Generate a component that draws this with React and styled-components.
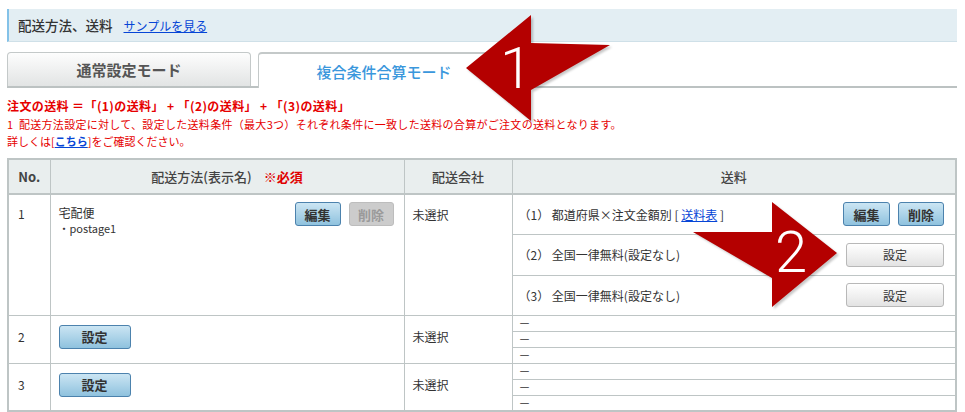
import React from 'react';
import styled, { createGlobalStyle } from 'styled-components';

const GlobalStyle = createGlobalStyle`
  body {
    margin: 0;
    background: #fff;
    font-family: "Noto Sans CJK JP", "Noto Sans", sans-serif;
    color: #333;
  }
`;

const Page = styled.div`
  position: relative;
  width: 950px;
  padding: 9px 8px 0 7px;
  overflow: hidden;
`;

const HeaderBar = styled.div`
  display: flex;
  align-items: center;
  gap: 11px;
  height: 33px;
  padding-left: 9px;
  background: #e3eef3;
  border-left: 2px solid #84c2e8;
  border-bottom: 1px solid #cfe0e8;
  box-sizing: border-box;
`;

const HeaderTitle = styled.span`
  font-size: 13.5px;
  font-weight: 500;
  color: #333;
`;

const TextLink = styled.a`
  color: #0645d6;
  text-decoration: underline;
  font-size: ${p => p.$size || 12}px;
  font-weight: ${p => (p.$bold ? 'bold' : 'normal')};
  cursor: pointer;
`;

const TabStrip = styled.div`
  display: flex;
  gap: 7px;
  margin-top: 10px;
  height: 34px;
  border-bottom: 2px solid #bcc2c2;
`;

const Tab = styled.div`
  width: ${p => (p.$active ? 252 : 244)}px;
  display: flex;
  align-items: center;
  justify-content: center;
  box-sizing: border-box;
  border: 1px solid #c4c9c9;
  border-bottom: none;
  border-radius: 4px 4px 0 0;
  font-size: 15px;
  font-weight: ${p => (p.$active ? 500 : 'bold')};
  color: ${p => (p.$active ? '#3a97dc' : '#555')};
  background: ${p => (p.$active ? '#fff' : 'linear-gradient(#fdfdfd, #e2e4e4)')};
  height: ${p => (p.$active ? 36 : 34)}px;
  margin-bottom: ${p => (p.$active ? -2 : 0)}px;
  border-top-width: ${p => (p.$active ? 2 : 1)}px;
`;

const Notes = styled.div`
  margin-top: 9px;
  color: #e60000;
`;

const NoteTitle = styled.div`
  font-size: 12px;
  font-weight: bold;
  line-height: 18px;
  letter-spacing: 0.4px;
  white-space: pre;
`;

const NoteLine = styled.div`
  font-size: 11px;
  line-height: 17px;
  letter-spacing: ${p => p.$spacing || 0}px;
  margin-top: ${p => p.$gap || 0}px;
  white-space: pre;
`;

const Table = styled.table`
  margin-top: 8px;
  width: 950px;
  border-collapse: collapse;
  border: 2px solid #bec5c5;
  table-layout: fixed;
  font-size: 12px;
  color: #333;
`;

const Th = styled.th`
  height: 33px;
  padding: 0;
  background: #e9eeee;
  border: 1px solid #bec5c5;
  border-bottom: 2px solid #bec5c5;
  font-size: 13px;
  font-weight: ${p => (p.$bold ? 'bold' : 500)};
  color: #444;
  text-align: center;
`;

const Required = styled.span`
  color: #e00000;
  font-weight: bold;
  margin-left: 12px;
`;

const Td = styled.td`
  border: 1px solid #bec5c5;
  vertical-align: top;
  padding: ${p => p.$pad || '10px 9px'};
`;

const SubTd = styled.td`
  border: 1px solid #bec5c5;
  height: ${p => p.$h}px;
  padding: 0 11px 0 6px;
  vertical-align: middle;
  box-sizing: border-box;
  line-height: ${p => (p.$h < 20 ? '14px' : 'normal')};
`;

const MethodCell = styled.div`
  display: flex;
  justify-content: space-between;
  align-items: flex-start;
`;

const MethodName = styled.div`
  padding-top: 2px;
  line-height: 17px;
`;

const Code = styled.div`
  font-size: 11px;
  line-height: 15px;
`;

const ButtonGroup = styled.div`
  display: flex;
  gap: 8px;
  align-items: center;
`;

const FeeRow = styled.div`
  display: flex;
  justify-content: space-between;
  align-items: center;
`;

const FeeText = styled.span`
  white-space: pre;
`;

const Button = styled.button`
  box-sizing: border-box;
  width: ${p => p.$w}px;
  height: 24px;
  padding: 0;
  border-radius: 3px;
  font-family: inherit;
  font-size: 13px;
  font-weight: bold;
  border: 1px solid #4c82ad;
  color: #333;
  background: linear-gradient(#cbe5f3, #8fc2de);
  cursor: pointer;

  &:disabled {
    border-color: #bdbdbd;
    color: #9a9a9a;
    background: #cccccc;
    cursor: default;
  }
`;

const PlainButton = styled.button`
  box-sizing: border-box;
  width: 98px;
  height: 24px;
  padding: 0;
  border: 1px solid #b8b8b8;
  border-radius: 3px;
  font-family: inherit;
  font-size: 12px;
  color: #333;
  background: linear-gradient(#ffffff, #e3e3e3);
  cursor: pointer;
`;

const Callout = styled.svg`
  position: absolute;
  left: ${p => p.$x}px;
  top: ${p => p.$y}px;
  overflow: visible;
  filter: drop-shadow(2px 2px 1px rgba(0, 0, 0, 0.22));
  pointer-events: none;
`;

const Digit = styled.text`
  font-family: "Roboto", "DejaVu Sans", sans-serif;
  font-weight: 300;
  font-size: 58px;
  fill: #fff;
`;

function Arrow({ x, y, w, h, points, label, lx, ly }) {
  return (
    <Callout $x={x} $y={y} width={w} height={h} viewBox={`${x} ${y} ${w} ${h}`}>
      <polygon points={points} fill="#b40000" />
      <Digit x={lx} y={ly}>{label}</Digit>
    </Callout>
  );
}

const dashRows = [2, 3];

export default function App() {
  return (
    <Page>
      <GlobalStyle />
      <HeaderBar>
        <HeaderTitle>配送方法、送料</HeaderTitle>
        <TextLink>サンプルを見る</TextLink>
      </HeaderBar>

      <TabStrip>
        <Tab>通常設定モード</Tab>
        <Tab $active>複合条件合算モード</Tab>
      </TabStrip>

      <Notes>
        <NoteTitle>注文の送料 ＝「(1)の送料」 + 「(2)の送料」 + 「(3)の送料」</NoteTitle>
        <NoteLine $gap={1} $spacing={0.3}>1  配送方法設定に対して、設定した送料条件（最大3つ）それぞれ条件に一致した送料の合算がご注文の送料となります。</NoteLine>
        <NoteLine>詳しくは[<TextLink $size={11} $bold>こちら</TextLink>]をご確認ください。</NoteLine>
      </Notes>

      <Table>
        <colgroup>
          <col style={{ width: 42 }} />
          <col style={{ width: 354 }} />
          <col style={{ width: 108 }} />
          <col />
        </colgroup>
        <thead>
          <tr>
            <Th $bold>No.</Th>
            <Th>配送方法(表示名)<Required>※必須</Required></Th>
            <Th>配送会社</Th>
            <Th>送料</Th>
          </tr>
        </thead>
        <tbody>
          <tr>
            <Td rowSpan={3}>1</Td>
            <Td rowSpan={3} $pad="7px 10px 0 8px">
              <MethodCell>
                <div>
                  <MethodName>宅配便</MethodName>
                  <Code>・postage1</Code>
                </div>
                <ButtonGroup>
                  <Button $w={46}>編集</Button>
                  <Button $w={45} disabled>削除</Button>
                </ButtonGroup>
              </MethodCell>
            </Td>
            <Td rowSpan={3} $pad="11px 8px">未選択</Td>
            <SubTd $h={40}>
              <FeeRow>
                <FeeText>（1） 都道府県×注文金額別 [ <TextLink>送料表</TextLink> ]</FeeText>
                <ButtonGroup>
                  <Button $w={47}>編集</Button>
                  <Button $w={46}>削除</Button>
                </ButtonGroup>
              </FeeRow>
            </SubTd>
          </tr>
          <tr>
            <SubTd $h={41}>
              <FeeRow>
                <FeeText>（2） 全国一律無料(設定なし)</FeeText>
                <PlainButton>設定</PlainButton>
              </FeeRow>
            </SubTd>
          </tr>
          <tr>
            <SubTd $h={40}>
              <FeeRow>
                <FeeText>（3） 全国一律無料(設定なし)</FeeText>
                <PlainButton>設定</PlainButton>
              </FeeRow>
            </SubTd>
          </tr>

          {dashRows.map(n => (
            <React.Fragment key={n}>
              <tr>
                <Td rowSpan={3} $pad="12px 9px 0">{n}</Td>
                <Td rowSpan={3} $pad="9px 8px 0">
                  <Button $w={72}>設定</Button>
                </Td>
                <Td rowSpan={3} $pad="12px 8px 0">未選択</Td>
                <SubTd $h={16}>－</SubTd>
              </tr>
              <tr>
                <SubTd $h={16}>－</SubTd>
              </tr>
              <tr>
                <SubTd $h={16}>－</SubTd>
              </tr>
            </React.Fragment>
          ))}
        </tbody>
      </Table>

      <Arrow
        x={460} y={10} w={160} h={120}
        points="466,68 531,15 531,43 610,45 531,90 531,121"
        label="1" lx={500} ly={88}
      />
      <Arrow
        x={688} y={196} w={160} h={120}
        points="693,232 772,232 772,202 837,253 772,307 772,278"
        label="2" lx={775} ly={272}
      />
    </Page>
  );
}
